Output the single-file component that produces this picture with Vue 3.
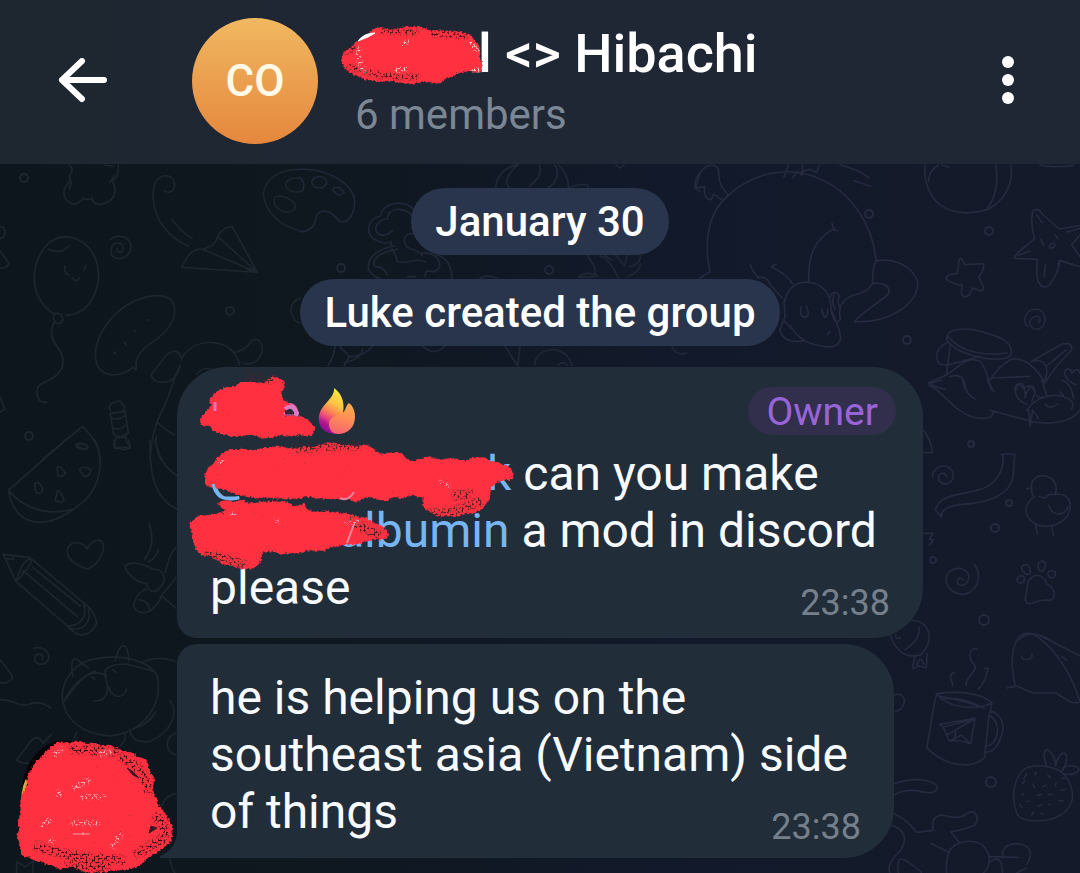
<script setup>
const header = { initials: 'CO', title: 'l <> Hibachi', members: '6 members' }
const notices = ['January 30', 'Luke created the group']

// Wallpaper doodles, grouped by tile; each tile is drawn at three times its size.
const tiles = [
  {
    at: [0, 160], tone: 'cool',
    paths: [
      'M208 15Q225 28 208 48Q216 62 203 72C182 94 192 128 222 132Q240 130 248 114Q262 122 277 114Q275 130 300 133C337 128 354 102 341 72Q334 64 345 56Q356 48 355 15M207 48L214 68L208 88M342 48L329 68M315 15L338 18',
      'M492 92C512 105 529 88 522 63C513 43 480 40 465 70C452 105 461 160 490 199Q520 241 565 258M517 179Q544 217 576 234',
      'M772 337L697 200Q660 203 647 245L636 257L608 268Q573 261 545 322L772 337L608 268M772 337L656 232M740 326L752 332',
      'M900 28C840 28 794 55 790 103C796 153 833 195 900 213M900 55C870 50 854 65 858 80C865 95 885 98 900 94M822 117C828 102 868 108 884 131C892 150 872 160 851 154C829 147 820 133 822 117Z',
      'M161 461C121 438 100 390 103 342C110 280 145 231 199 230C257 235 294 282 296 345C293 412 255 468 197 465M145 268C170 280 195 274 206 257M195 318Q190 340 207 345M217 354Q228 370 237 355M253 330L258 315',
      'M173 459Q160 460 160 475L169 490Q182 493 189 480Q189 465 173 459ZM164 484C145 525 157 540 174 563C193 590 195 615 176 638C151 670 122 660 112 685C108 710 117 730 139 727',
      'M331 239C350 221 388 227 393 257C394 283 369 301 347 294C326 288 330 251 351 249C370 247 376 272 361 277Q350 277 351 266',
      'M399 623C340 665 288 642 286 588C285 520 340 460 386 432C449 398 515 396 524 442C530 492 484 529 442 557Q405 590 408 613L409 630L399 623M372 545L378 556M342 576L347 581M401 511L407 514M444 479L448 480',
      'M545 595C567 558 604 545 640 548C680 552 708 574 719 615M545 600C540 571 522 568 503 582C483 601 475 620 459 636C447 650 463 667 490 667Q530 665 541 615L526 646Q506 715 485 755Q455 810 450 898M702 578Q739 570 753 545C772 528 787 545 787 574C779 602 759 618 724 609M470 785Q495 811 524 825M469 830Q463 855 482 898M590 642Q610 617 642 630',
      'M332 752C320 737 338 726 346 728C356 718 370 725 365 732C381 739 374 749 368 752M331 760L341 824Q360 838 385 819L375 754Q350 758 331 760ZM336 775Q355 782 376 766M340 805Q362 812 382 792M347 835C348 845 337 852 344 865C360 861 362 857 365 869C382 869 397 863 387 854Q377 847 379 833Q362 829 347 835',
      'M130 895L247 800Q300 849 300 900M227 854C242 845 262 852 263 865C252 872 233 869 227 854ZM0 200Q18 200 14 224Q8 236 0 235M0 272L25 307Q30 322 0 325M0 710L14 748L0 757M900 415Q872 423 873 455Q880 485 900 490'
    ]
  },
  {
    at: [0, 440], tone: 'cool',
    paths: [
      'M25 151L197 0M285 0C313 60 302 135 255 180C200 229 153 250 112 247C63 242 36 210 25 151Q105 240 221 207M104 130Q115 120 129 146Q125 167 107 156ZM171 83Q181 73 196 99Q187 114 174 106ZM238 89Q252 74 273 90Q269 111 252 109ZM172 152Q183 153 192 181Q182 193 166 181ZM228 12Q258 7 264 22Q248 34 228 12ZM343 0Q340 25 355 26Q374 18 390 25L386 0',
      'M265 388C229 377 200 359 202 330C208 304 242 299 261 327C280 292 311 293 311 323C307 355 285 376 265 388Z',
      'M10 343L89 352L250 488M10 343L48 425L218 571M14 355L38 358L40 348M92 356Q63 365 50 421L62 411Q70 405 70 393Q82 395 85 378Q95 376 92 356M72 394L232 530M98 382L241 498M250 488C274 504 285 520 290 548C283 570 263 588 239 584Q222 581 201 557C241 560 266 528 250 488M265 507C277 550 245 575 210 564',
      'M100 625C124 617 149 632 146 655C135 681 104 677 104 653C112 634 133 644 127 658',
      'M188 785C180 720 225 665 290 656C370 639 450 665 472 708C490 800 426 878 330 888C247 884 200 840 188 785ZM193 784C230 730 252 706 286 692M218 710C212 670 217 655 228 656L266 685M346 661C354 628 365 608 379 621Q387 642 386 664M194 780C245 690 290 690 319 708Q300 673 380 672L457 693M316 712C329 745 325 786 282 782M327 741C330 771 370 783 379 747M276 711L284 718M338 688L348 697M430 665C465 650 500 654 528 665M389 867C392 900 417 909 450 904C510 878 538 825 511 781M400 866Q445 855 467 816M230 877L222 895M375 880Q380 900 360 918M528 880C490 895 496 935 528 946',
      'M450 0C448 110 465 175 530 208M465 0Q480 76 530 106M448 252Q469 310 433 359M475 329Q467 355 445 366M375 378C390 362 430 371 459 388C491 385 502 419 481 443C465 460 442 458 440 429C415 430 380 405 375 378ZM440 447C420 450 398 484 402 501C413 525 445 520 459 505Q482 483 485 467L528 505M481 472Q499 449 528 414M415 480Q445 478 450 513M496 398Q510 335 528 322',
      'M0 660Q35 699 37 715Q20 735 0 727M0 779C35 775 50 800 80 795Q123 778 152 805M154 883L129 910Q115 880 91 905L50 960Q62 973 112 969M0 900M528 1060C505 1065 490 1080 483 1100M508 1235Q510 1280 525 1299M50 1299L50 1265L75 1280L100 1263L98 1299'
    ]
  },
  {
    at: [300, 160], tone: 'mid',
    paths: [
      'M0 28C80 25 165 70 164 130C160 172 139 195 114 181C90 145 50 145 47 177C42 205 24 215 0 215M35 65C45 42 82 48 80 68C73 92 37 87 35 65ZM97 88Q115 72 132 97Q120 117 97 88ZM0 52Q15 64 10 90L0 95',
      'M344 152C318 115 245 126 242 168C198 176 195 229 229 241Q255 257 275 244C266 274 297 285 289 302C321 319 344 289 375 305M342 170C310 139 265 141 262 177C227 181 217 213 240 224Q260 230 277 212M342 222C310 215 302 251 330 267Q355 270 367 286M283 258C210 271 202 308 206 330Q225 354 240 356M292 268C226 278 214 307 226 320Q250 318 262 346M365 280Q410 276 417 306Q425 325 402 335L379 333L374 350M412 285Q455 299 456 356M323 350L345 350',
      'M587 82C590 40 625 18 655 13M627 82Q605 58 653 15M717 15C730 40 708 62 688 80M763 15C786 40 760 79 744 82M775 15Q807 45 805 82M810 82Q848 68 865 77L861 85M948 15L960 24L972 15M1200 42L1187 85L1200 95',
      'M862 286C875 310 890 315 884 350L835 352Q860 330 895 349M900 288Q930 298 956 356M914 287L935 300M939 276L974 317L981 287M990 320Q1025 310 1020 287M984 350Q1020 335 1022 311M540 356Q560 339 593 356M105 558Q105 583 84 618M120 560L148 590L132 618M148 590Q195 588 218 558M134 607Q180 600 188 568M370 560Q405 590 434 558M615 558L653 618L660 560M704 616C706 556 800 551 816 616M773 615Q789 602 803 615M1115 558Q1130 591 1160 578'
    ]
  },
  {
    at: [660, 160], tone: 'warm',
    paths: [
      'M206 105C280 39 385 15 475 55C570 93 638 190 648 302C704 294 758 319 773 365C778 424 699 490 583 485C614 449 660 428 686 401C692 373 662 367 638 370M648 302Q636 330 638 370Q625 397 576 407Q548 419 539 445M206 105C151 150 127 232 150 335L120 354M187 119C166 111 162 88 155 119Q129 120 134 80L105 84C103 50 132 14 158 15Q178 17 176 45Q178 81 206 105M372 52L385 15M397 54L412 35L427 45L427 15M425 35L448 28L470 37L478 15M540 15Q595 28 627 53M583 62L632 79',
      'M447 368C442 285 465 237 520 207L533 212M516 190L523 212M374 425C382 384 405 366 443 366C495 371 514 410 513 448Q540 505 542 535C536 565 505 566 458 552Q415 540 390 496M372 423L375 470L360 510C367 543 402 548 430 542M370 480L400 510M424 440C415 466 431 477 442 468Q449 460 439 440M485 447Q490 470 496 472Q506 461 502 447M510 410C517 390 540 397 537 413C528 430 541 432 540 450C533 468 551 478 529 487Q518 476 513 448M522 407Q513 430 525 447M503 523L510 515M271 315Q280 341 297 353M334 320L348 313M334 320Q382 344 397 370M293 354Q320 345 330 373L367 414',
      'M795 15C790 65 810 115 844 137C884 165 940 162 983 148C1030 125 1062 75 1053 15M845 15L865 22M835 15Q805 35 806 65M1008 15C1012 50 1015 100 983 144M1140 15Q1180 24 1240 16',
      'M1118 155Q1130 138 1147 162L1197 207L1260 197M1118 155Q1110 190 1124 235C1100 260 1060 282 1064 295L1132 298Q1126 360 1141 374Q1150 387 1167 376Q1193 345 1200 302L1260 320M1130 165L1147 188M1075 286L1110 273M1156 314L1152 350M1181 248Q1165 254 1168 263Q1184 266 1185 253M1142 238L1151 255M1185 224L1194 236M1194 315L1198 300M1220 216L1260 205M1235 254L1260 225M1235 254L1260 290',
      'M897 298Q905 290 914 314L968 311Q975 314 967 335L956 350L971 382Q971 395 956 391L937 384Q929 412 914 410Q902 406 905 390L907 376Q870 371 857 355Q863 341 892 340Z',
      'M1102 500C1085 480 1098 449 1127 447C1160 449 1165 493 1138 506C1118 514 1097 489 1118 473C1137 458 1146 481 1136 487',
      'M862 542C850 505 918 499 971 517C1034 532 1062 555 1052 586C1037 604 980 600 928 583Q880 568 862 542ZM866 531C900 575 970 589 1042 579M864 547Q821 565 833 605C842 623 874 614 960 588M871 555L859 645M859 645L905 612Q934 590 962 605Q984 638 993 690M859 645L806 668Q820 680 855 688M868 650Q918 636 916 690M990 660Q1010 625 1053 597Q1109 590 1155 668M993 654L1110 649M1115 604C1150 594 1171 617 1155 660M1115 604L1200 555C1229 544 1240 556 1233 573Q1192 610 1155 668M1162 616L1218 570M1070 688C1070 666 1092 665 1093 685Q1114 668 1120 690M1213 640C1218 620 1235 625 1235 640Q1254 618 1260 640M1213 640Q1220 665 1250 675'
    ]
  },
  {
    at: [880, 380], tone: 'warm',
    paths: [
      'M185 0L148 10Q145 17 158 22C190 40 225 95 280 112Q340 124 340 93L330 91M340 93L460 126C520 135 580 125 600 90M248 0Q257 45 286 57M322 0L342 36M406 24C405 0 440 16 435 53M435 53C450 0 480 15 455 65M406 24Q402 57 440 73M440 92C460 60 500 40 543 48Q590 60 575 87M495 73Q511 92 532 72M470 45Q474 55 484 52M485 0L500 45M545 0Q575 10 580 55M445 86L450 138L458 90L475 115M540 36L551 48',
      'M130 151Q155 180 157 218L130 218',
      'M157 291C159 265 185 250 206 262C226 275 223 305 200 311C180 315 169 295 180 283Q195 274 200 290',
      'M363 222L404 222M368 225C375 265 350 319 290 331C234 346 180 344 166 389L184 411Q180 383 238 374C320 368 391 350 400 285L404 222',
      'M440 325L455 325C450 300 470 286 490 287C520 290 535 315 526 341M455 325Q454 345 463 350C420 380 438 423 477 436C525 447 570 420 571 378C570 345 545 340 523 344Q508 339 495 354L478 350M507 376C517 415 560 404 564 380M466 433L473 463M516 439L520 465',
      'M283 553C310 590 291 635 250 644C204 639 185 600 207 576C235 553 270 571 266 596C260 622 230 622 232 602Q235 590 249 598',
      'M437 649C445 625 435 600 463 587C483 581 495 600 501 612C528 625 528 651 511 661Q490 659 468 665C446 677 431 669 437 649ZM425 560Q441 546 450 564Q455 582 443 584Q424 578 425 560ZM476 550Q486 535 497 551Q495 574 482 574Q471 567 476 550ZM504 579Q512 565 526 577Q528 593 514 594Q502 590 504 579ZM411 598Q417 583 432 590Q436 606 423 610Q409 608 411 598Z',
      'M130 460L160 460L148 476L160 480L148 496M417 780Q450 745 510 780'
    ]
  },
  {
    at: [860, 620], tone: 'warm',
    paths: [
      'M90 45C110 100 145 117 183 104C225 60 213 0 145 0M107 44Q105 60 121 53M178 23C178 60 155 75 135 89M165 105L158 145Q167 148 173 137L185 139L199 144L201 101M170 133Q181 105 192 132M104 224C145 215 139 270 107 274',
      'M350 88C330 80 320 110 344 136C355 155 315 168 318 197M373 145L385 145C376 165 380 185 355 207M283 157C258 170 281 185 278 198',
      'M230 221C215 280 210 340 200 383C238 423 288 438 328 434Q355 430 374 412L386 292Q392 268 396 249C370 226 320 210 230 221M230 221C260 261 340 274 396 249M240 229C275 235 330 247 372 265M245 239Q295 224 372 265M390 273C430 282 437 325 421 356C409 389 390 400 374 395M390 288C424 306 420 373 376 380',
      'M238 313L345 295L332 371L304 363L268 363L250 322L238 313ZM250 321L340 299L260 345L268 363L304 345L332 371M287 335L283 360',
      'M104 491C150 473 218 475 232 500C230 523 205 521 172 512Q130 508 104 524M104 582Q140 598 170 637L220 631Q211 588 247 585Q300 601 321 581C345 562 360 592 345 616Q310 630 273 636L300 670M213 670L266 697M92 615C128 625 146 651 123 690C88 722 82 745 90 759M115 758Q110 720 123 717Q145 721 184 757M266 697C280 665 337 653 369 676C396 705 392 740 370 759M260 759Q256 735 266 697M386 710L475 712M390 725Q428 700 427 759M430 715C418 678 455 667 481 672C520 680 515 710 500 734M470 759L498 745',
      'M442 204C453 198 460 205 466 197C453 145 452 90 475 53C490 34 525 38 555 54L660 107M466 197L520 219L587 219L630 245Q650 253 660 245M515 40C575 71 633 155 658 240M483 108Q488 121 502 118Q520 115 515 102M607 111L620 121',
      'M606 458C585 440 520 427 492 449C461 474 452 530 471 583C483 603 520 605 563 600C617 589 650 550 633 500Q624 472 606 458ZM560 439C550 407 548 392 563 389Q584 399 587 438M587 438C593 402 615 388 620 409Q620 435 604 457M609 444C628 431 663 439 655 453Q639 467 614 462',
      'M488 490L494 483M525 465L528 457M564 466L570 472M519 492L524 503M548 500L558 496M585 496L590 488M607 474L614 476M484 525L491 522M501 545L508 542M532 526L544 523M566 524L576 522M603 511L614 509M535 560L544 554M565 554L571 552M597 542L609 543M515 585L520 575M541 579L550 582M480 553L485 562M500 462L491 476'
    ]
  }
]
const rings = [
  [24, 178, 4, 'cool'], [230, 311, 4, 'cool'], [29, 436, 4, 'cool'], [341, 268, 4, 'mid'], [549, 270, 4, 'mid'],
  [869, 214, 4, 'warm'], [989, 231, 4, 'warm'], [907, 340, 4, 'warm'], [971, 444, 3, 'warm'], [1009, 503, 3, 'warm'],
  [995, 528, 4, 'warm'], [933, 560, 3, 'warm'], [984, 620, 5, 'warm'], [991, 782, 5, 'warm']
]
const third = 1 / 3
</script>

<template>
  <div class="app">
    <svg class="defs" aria-hidden="true">
      <defs>
        <filter id="marker" x="-10%" y="-10%" width="120%" height="120%" color-interpolation-filters="sRGB">
          <feTurbulence type="fractalNoise" baseFrequency="0.06" numOctaves="2" seed="4" result="wave" />
          <feDisplacementMap in="SourceAlpha" in2="wave" scale="9" xChannelSelector="R" yChannelSelector="G" result="shape" />
          <feGaussianBlur in="shape" stdDeviation="1.6" result="soft" />
          <feTurbulence type="fractalNoise" baseFrequency="0.45" numOctaves="2" seed="9" result="grain" />
          <feComposite in="soft" in2="grain" operator="arithmetic" k1="0" k2="4" k3="4" k4="-3.8" result="mask" />
          <feFlood flood-color="#ff3040" />
          <feComposite in2="mask" operator="in" />
        </filter>
        <filter id="specks" x="-20%" y="-20%" width="140%" height="140%">
          <feGaussianBlur in="SourceGraphic" stdDeviation="0.8" result="soft" />
          <feTurbulence type="fractalNoise" baseFrequency="0.5" numOctaves="2" seed="3" />
          <feColorMatrix values="0 0 0 0 0  0 0 0 0 0  0 0 0 0 0  0 0 0 8 -4" result="grain" />
          <feComposite in="soft" in2="grain" operator="in" />
        </filter>
      </defs>
    </svg>

    <header class="topbar">
      <button class="icon-button back" type="button" aria-label="Back">
        <svg width="50" height="46" viewBox="0 0 50 46" aria-hidden="true">
          <path d="M46 22H4M24 3L4 22L24 41" fill="none" stroke="#fff" stroke-width="6" stroke-linecap="round" stroke-linejoin="round" />
        </svg>
      </button>
      <div class="initials">{{ header.initials }}</div>
      <div class="heading">
        <h1 class="title"><span class="gap gap-title"></span>{{ header.title }}</h1>
        <p class="members">{{ header.members }}</p>
        <svg class="scribble scribble-title" width="160" height="80" viewBox="330 16 160 80" aria-hidden="true">
          <g filter="url(#marker)">
            <path d="M341 60C343 49 354 42 366 36L376 27L415 27L452 30C469 31 471 37 471 42C480 46 483 58 482 72C466 73 453 74 449 78C442 85 425 84 405 83C380 84 352 77 343 69Z" />
          </g>
          <path d="M358 41Q364 33 375 33L368 37Z" fill="#fff" stroke="#fff" />
          <g fill="none" filter="url(#specks)">
            <path d="M381 31L418 32M430 33L466 36M346 66Q375 77 418 77M345 52L356 46" stroke="#4b1824" stroke-width="6" />
            <path d="M360 48Q355 58 364 70M470 42L478 52M473 70L480 70M397 70L406 69M403 45L408 42" stroke="#ffe4e6" stroke-width="4" stroke-linecap="round" />
          </g>
        </svg>
      </div>
      <button class="icon-button more" type="button" aria-label="More options">
        <svg width="14" height="50" viewBox="0 0 14 50" aria-hidden="true">
          <g fill="#fff"><circle cx="7" cy="6" r="6" /><circle cx="7" cy="24" r="6" /><circle cx="7" cy="42" r="6" /></g>
        </svg>
      </button>
    </header>

    <main class="chat">
      <svg class="wallpaper" viewBox="0 164 1080 709" preserveAspectRatio="xMidYMin slice" aria-hidden="true">
        <g v-for="(tile, i) in tiles" :key="i" :class="tile.tone" :transform="`translate(${tile.at[0]} ${tile.at[1]}) scale(${third})`">
          <path v-for="(d, j) in tile.paths" :key="j" :d="d" stroke-width="5" />
        </g>
        <circle v-for="(r, i) in rings" :key="'r' + i" :class="r[3]" :cx="r[0]" :cy="r[1]" :r="r[2]" stroke-width="2" />
      </svg>

      <p v-for="notice in notices" :key="notice" class="notice">{{ notice }}</p>

      <section class="thread">
        <div class="sender">
          <svg width="177" height="153" viewBox="0 720 177 153" aria-hidden="true">
            <path d="M22 800C20 770 34 745 62 740L118 747L90 775L25 820Z" fill="#080306" />
            <path d="M24 806Q21 793 27 780" stroke="#d3ab36" stroke-width="3" fill="none" />
            <g filter="url(#marker)">
              <path d="M19 815C23 775 34 753 62 742L95 742L118 748C142 750 154 765 154 790L158 808C169 812 174 825 171 837C166 850 148 855 139 864C130 874 115 874 90 872C65 869 40 862 25 857C16 853 16 835 19 815Z" />
            </g>
            <g fill="none" filter="url(#specks)">
              <path d="M70 749L118 752M120 756Q148 770 148 793M154 815Q170 826 162 840L135 855M35 845Q60 857 125 860M65 865L110 867" stroke="#42101c" stroke-width="9" />
              <path d="M73 788L90 780M80 797L106 797M70 823L100 823M41 827L52 818M49 838L54 844M60 788L59 798M54 756L62 748M99 754L112 751M121 833L112 848" stroke="#ffb5bd" stroke-width="5" />
            </g>
            <path d="M151 826L157 828L149 833ZM127 768L132 771L139 778L133 775Z" fill="#3a1825" stroke="#3a1825" stroke-width="1" />
            <path d="M73 834H90M83 832V835M74 788L81 787" stroke="#ff9ba1" stroke-width="1" fill="none" />
          </svg>
        </div>
        <div class="bubbles">
          <article class="bubble first">
            <div class="author">
              <span class="name">Luke</span>
              <svg class="flame" width="40" height="50" viewBox="0 0 40 50" role="img" aria-label="fire">
                <defs>
                  <linearGradient id="flameBack" x1="0.6" y1="0" x2="0.3" y2="1">
                    <stop offset="0" stop-color="#ffe93c" /><stop offset="0.3" stop-color="#ffc444" />
                    <stop offset="0.5" stop-color="#fb8653" /><stop offset="0.66" stop-color="#e9497a" /><stop offset="0.8" stop-color="#b0158f" /><stop offset="1" stop-color="#850a98" />
                  </linearGradient>
                  <linearGradient id="flameFront" x1="0.7" y1="0" x2="0.4" y2="1">
                    <stop offset="0" stop-color="#ffad4c" /><stop offset="0.5" stop-color="#ff8c57" /><stop offset="1" stop-color="#f4646f" />
                  </linearGradient>
                </defs>
                <path d="M17 2C18 10 10 15 4 24C-2 36 4 48 19 48L26 38V26C28 15 24 7 17 2Z" fill="url(#flameBack)" />
                <path d="M32 17C28 20 29 26 24 28C16 29 11 34 12 40C13 45 16 48 21 48C31 48 38 41 38 31C38 25 36 20 32 17Z" fill="url(#flameFront)" />
              </svg>
              <span class="role">Owner</span>
            </div>
            <p class="text"><a class="mention" href="#">@<span class="gap gap-handle"></span>k</a> can you make <a class="mention" href="#"><span class="gap gap-mod"></span>albumin</a> a mod in discord please<time class="time">23:38</time></p>
            <svg class="scribble scribble-text" width="380" height="290" viewBox="0 0 380 290" aria-hidden="true">
              <g filter="url(#marker)">
                <g :transform="`scale(${third})`">
                  <path d="M79 182L118 150L128 132L112 115L135 97L195 78L210 67L265 73L302 49C330 47 346 66 340 87L330 103L358 130L343 167L392 165C430 175 440 204 427 221L375 226L330 233L180 230L140 217L123 202L95 200Z" />
                  <path d="M102 340C105 315 130 310 145 292L180 262L380 263L490 249L595 253L620 274L675 278L710 296L960 294C1005 305 1038 325 1032 347C1018 365 985 365 968 380C973 430 920 466 850 473C795 475 758 467 760 410L690 410L640 418L380 418L215 412L155 389C125 374 102 365 102 340Z" />
                  <path d="M60 484L87 465L165 455L140 432L160 420L345 425L400 433L415 453L500 455L590 475L650 505C664 530 651 546 610 540L540 555L440 572L390 582L285 575C280 600 268 624 240 624L155 610L104 590C83 573 65 549 68 518Z" />
                </g>
              </g>
              <g fill="none" filter="url(#specks)">
                <path d="M259 152Q275 158 313 140M282 136L303 134M75 14L105 20M125 88L190 85M35 194L75 204M178 160L210 176" stroke="#48202b" stroke-width="9" />
                <path d="M48 104L54 100M60 154L67 154M175 164L190 161M106 159L108 164M269 121L280 127" stroke="#f6a7c6" stroke-width="4" />
              </g>
              <path d="M45 42V51" fill="none" stroke="#db75c2" stroke-width="3" />
              <path d="M43 124C45 133 50 139 57 138L69 138" fill="none" stroke="#77b5f3" stroke-width="3" />
              <path d="M115 49Q122 43 127 53L126 56" fill="none" stroke="#de79c4" stroke-width="4" />
              <path d="M115 53L124 53" fill="none" stroke="#392432" stroke-width="3" />
              <path d="M170 138Q178 142 184 132" fill="none" stroke="#e77f9c" stroke-width="2" />
              <path d="M177 183L184 164" fill="none" stroke="#e98ba2" stroke-width="2" />
            </svg>
          </article>
          <article class="bubble second">
            <p class="text">he is helping us on the southeast asia (Vietnam) side of things<time class="time">23:38</time></p>
            <svg class="tail" width="20" height="28" viewBox="0 0 20 28" aria-hidden="true">
              <path d="M17 0C17 12 12 21 0 26V28H20V0Z" fill="#212d39" />
            </svg>
          </article>
        </div>
      </section>
    </main>
  </div>
</template>

<style>
body { background: #10171f; }
</style>

<style scoped>
.app { font-family: Roboto, "Liberation Sans", sans-serif; color: #fff; }
.defs { position: absolute; width: 0; height: 0; }
h1, p { margin: 0; }

.topbar {
  box-sizing: border-box;
  min-height: 164px;
  padding: 0 65px 2px 58px;
  display: flex;
  align-items: center;
  background: linear-gradient(90deg, #1e262f 0%, #1f2735 35%, #1f2735 100%);
}
.icon-button { display: flex; padding: 0; border: 0; background: none; cursor: pointer; }
.back { margin-right: 84px; }
.more { margin-left: auto; }
.initials {
  flex: none;
  width: 126px;
  height: 126px;
  margin-right: 37px;
  border-radius: 50%;
  display: grid;
  place-items: center;
  background: linear-gradient(#f1b860, #e5873d);
  color: #fffae8;
  font-size: 44px;
  font-weight: 500;
}
.heading { position: relative; white-space: nowrap; }
.title { font-size: 54px; line-height: 64px; font-weight: 500; }
.members { margin-top: 4px; font-size: 42px; line-height: 50px; color: #7b8794; }
.gap { display: inline-block; }
.gap-title { width: 123px; }
.gap-handle { width: 234px; }
.gap-mod { width: 128px; }
.scribble { position: absolute; pointer-events: none; }
.scribble-title { left: -25px; top: -6px; }
.scribble-text { left: -7px; top: -7px; }

.chat {
  position: relative;
  isolation: isolate;
  padding-top: 24px;
  display: flex;
  flex-direction: column;
  align-items: center;
  background: linear-gradient(90deg, #0e161d 0%, #0f171f 28%, #12192a 62%, #141a29 100%);
}
.wallpaper { position: absolute; inset: 0; width: 100%; height: 100%; z-index: -1; fill: none; stroke-linecap: round; stroke-linejoin: round; }
.cool { stroke: #1d262e; }
.mid { stroke: #202838; }
.warm { stroke: #252a3f; }
.notice {
  margin-bottom: 24px;
  padding: 8px 24px;
  border-radius: 34px;
  background: rgba(43, 56, 80, 0.93);
  font-size: 42px;
  line-height: 51px;
  font-weight: 500;
}

.thread { align-self: stretch; display: flex; margin-top: -3px; }
.sender { flex: none; width: 177px; display: flex; align-items: flex-end; position: relative; z-index: 1; }
.sender svg { display: block; }
.bubbles { display: flex; flex-direction: column; align-items: flex-start; gap: 6px; padding-bottom: 15px; }
.bubble { position: relative; box-sizing: border-box; background: #212d39; }
.first { max-width: 746px; padding: 20px 33px 22px; border-radius: 50px 50px 50px 20px; }
.second { max-width: 717px; padding: 25px 33px 18px; border-radius: 20px 50px 50px 0; }
.author { display: flex; align-items: center; height: 48px; margin: 0 -6px 10px 0; }
.name { color: #da70c0; font-size: 42px; font-weight: 500; }
.flame { margin-left: 18px; }
.role {
  box-sizing: border-box;
  height: 48px;
  margin-left: auto;
  padding: 1px 18px 0;
  border-radius: 24px;
  background: #322f4d;
  color: #9964d9;
  font-size: 39px;
  line-height: 49px;
}
.text { font-size: 48px; line-height: 57px; color: #f7faff; }
.mention { color: #77b5f3; text-decoration: none; white-space: nowrap; }
.time { float: right; margin: 23px 0 -8px; font-size: 36px; line-height: 42px; color: #75808b; }
.tail { position: absolute; left: -17px; bottom: 0; }
</style>
